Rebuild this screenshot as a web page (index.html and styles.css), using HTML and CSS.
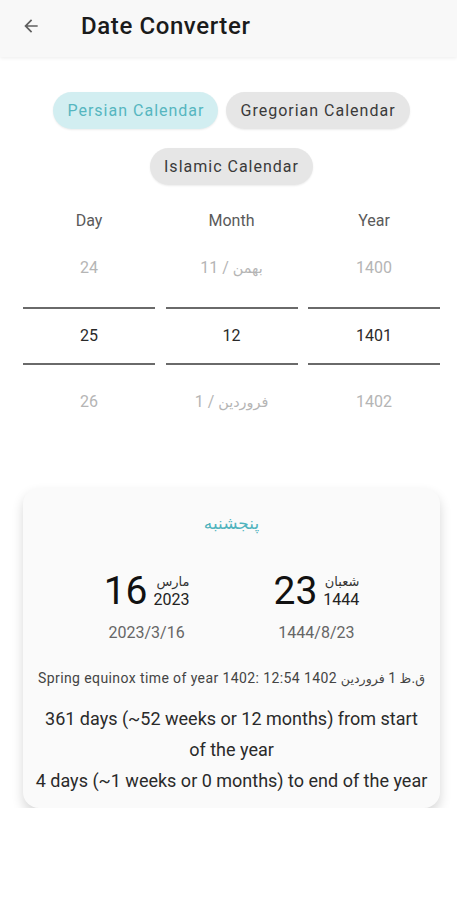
FILE: index.html
```html
<!DOCTYPE html>
<html lang="en">
<head>
    <meta charset="UTF-8">
    <meta name="viewport" content="width=device-width, initial-scale=1.0">
    <title>Date Converter</title>
    <link rel="stylesheet" href="styles.css">
</head>
<body>

<div class="appbar">
    <svg class="back" width="20" height="20" viewBox="0 0 24 24">
        <path d="M20 11H7.83l5.59-5.59L12 4l-8 8 8 8 1.41-1.41L7.83 13H20v-2z" fill="#5f5f5f"/>
    </svg>
    <h1>Date Converter</h1>
</div>

<div class="chips">
    <div class="chip-row">
        <span class="chip active">Persian Calendar</span>
        <span class="chip">Gregorian Calendar</span>
    </div>
    <div class="chip-row">
        <span class="chip">Islamic Calendar</span>
    </div>
</div>

<div class="picker">
    <div class="column">
        <div class="label">Day</div>
        <div class="item">24</div>
        <div class="item selected">25</div>
        <div class="item">26</div>
    </div>
    <div class="column">
        <div class="label">Month</div>
        <div class="item">11 / <span class="fa">بهمن</span></div>
        <div class="item selected">12</div>
        <div class="item">1 / <span class="fa">فروردین</span></div>
    </div>
    <div class="column">
        <div class="label">Year</div>
        <div class="item">1400</div>
        <div class="item selected">1401</div>
        <div class="item">1402</div>
    </div>
</div>

<div class="card">
    <div class="weekday" dir="rtl">پنجشنبه</div>

    <div class="dates">
        <div class="date">
            <div class="date-main">
                <span class="day">16</span>
                <span class="month-year">
                    <span class="month" dir="rtl">مارس</span>
                    <span class="year">2023</span>
                </span>
            </div>
            <div class="date-short">2023/3/16</div>
        </div>
        <div class="date">
            <div class="date-main">
                <span class="day">23</span>
                <span class="month-year">
                    <span class="month" dir="rtl">شعبان</span>
                    <span class="year">1444</span>
                </span>
            </div>
            <div class="date-short">1444/8/23</div>
        </div>
    </div>

    <p class="equinox">Spring equinox time of year 1402: 12:54 1402 <span class="fa">فروردین</span> 1 <span class="fa">ق.ظ</span></p>

    <p class="summary from-start">361 days (~52 weeks or 12 months) from start of the year</p>
    <p class="summary">4 days (~1 weeks or 0 months) to end of the year</p>
</div>

</body>
</html>
```

FILE: styles.css
```css
body {
    margin: 0;
    background: #fff;
    font-family: Roboto, "DejaVu Sans", sans-serif;
    color: #222;
}
.fa {
    direction: rtl;
    unicode-bidi: isolate;
    font-family: "DejaVu Sans", sans-serif;
    font-size: 0.9em;
}
.appbar {
    height: 57px;
    background: #f8f8f8;
    box-shadow: 0 1px 4px rgba(0, 0, 0, 0.08);
    display: flex;
    align-items: center;
    padding-left: 21px;
    box-sizing: border-box;
}
.appbar .back {
    margin-top: -6px;
}
.appbar h1 {
    margin: -6px 0 0 40px;
    font-size: 24px;
    font-weight: 500;
    letter-spacing: 0.6px;
    color: #1b1b1b;
}
.chips {
    margin-top: 35px;
    padding-left: 6px;
    display: flex;
    flex-direction: column;
    gap: 19px;
}
.chip-row {
    display: flex;
    justify-content: center;
    gap: 8px;
}
.chip {
    height: 37px;
    line-height: 37px;
    padding: 0 14px;
    border-radius: 19px;
    background: #e6e6e6;
    color: #3a3a3a;
    font-size: 16px;
    letter-spacing: 1px;
    box-shadow: 0 1px 2px rgba(0, 0, 0, 0.08);
}
.chip.active {
    background: #d2eef1;
    color: #56b6c0;
}
.picker {
    margin: 24px 0 0 23px;
    width: 417px;
    display: grid;
    grid-template-columns: 132px 132px 132px;
    column-gap: 10.5px;
}
.column {
    display: flex;
    flex-direction: column;
    align-items: stretch;
    text-align: center;
}
.label {
    height: 24px;
    line-height: 24px;
    font-size: 16px;
    color: #5a5a5a;
    margin-bottom: 15px;
}
.item {
    height: 40px;
    line-height: 40px;
    font-size: 16px;
    color: #b5b5b5;
}
.item.selected {
    height: 54px;
    line-height: 54px;
    margin: 19px 0 17px;
    border-top: 2px solid #6a6a6a;
    border-bottom: 2px solid #6a6a6a;
    color: #2a2a2a;
}
.card {
    margin: 66px 0 0 23px;
    width: 417px;
    height: 320px;
    box-sizing: border-box;
    background: #fafafa;
    border-radius: 16px;
    box-shadow: 0 6px 12px rgba(0, 0, 0, 0.16);
    padding-top: 21px;
    text-align: center;
}
.weekday {
    font-family: "DejaVu Sans", sans-serif;
    font-size: 17px;
    color: #4fb3bd;
    line-height: 28px;
}
.dates {
    margin-top: 32px;
    display: flex;
    justify-content: center;
    gap: 84px;
}
.date-main {
    display: flex;
    align-items: center;
    gap: 6px;
}
.day {
    font-size: 39px;
    line-height: 44px;
    color: #111;
}
.month-year {
    display: flex;
    flex-direction: column;
    align-items: flex-end;
    line-height: 18px;
}
.month {
    font-family: "DejaVu Sans", sans-serif;
    font-size: 13px;
    color: #333;
}
.year {
    font-size: 16px;
    color: #222;
}
.date-short {
    margin-top: 10px;
    font-size: 16px;
    color: #666;
}
.equinox {
    margin: 28px 0 0;
    font-size: 14px;
    letter-spacing: 0.4px;
    color: #444;
}
.summary {
    margin: 0;
    font-size: 18px;
    line-height: 31px;
    color: #2a2a2a;
}
.from-start {
    margin: 17px 20px 0;
}
```
